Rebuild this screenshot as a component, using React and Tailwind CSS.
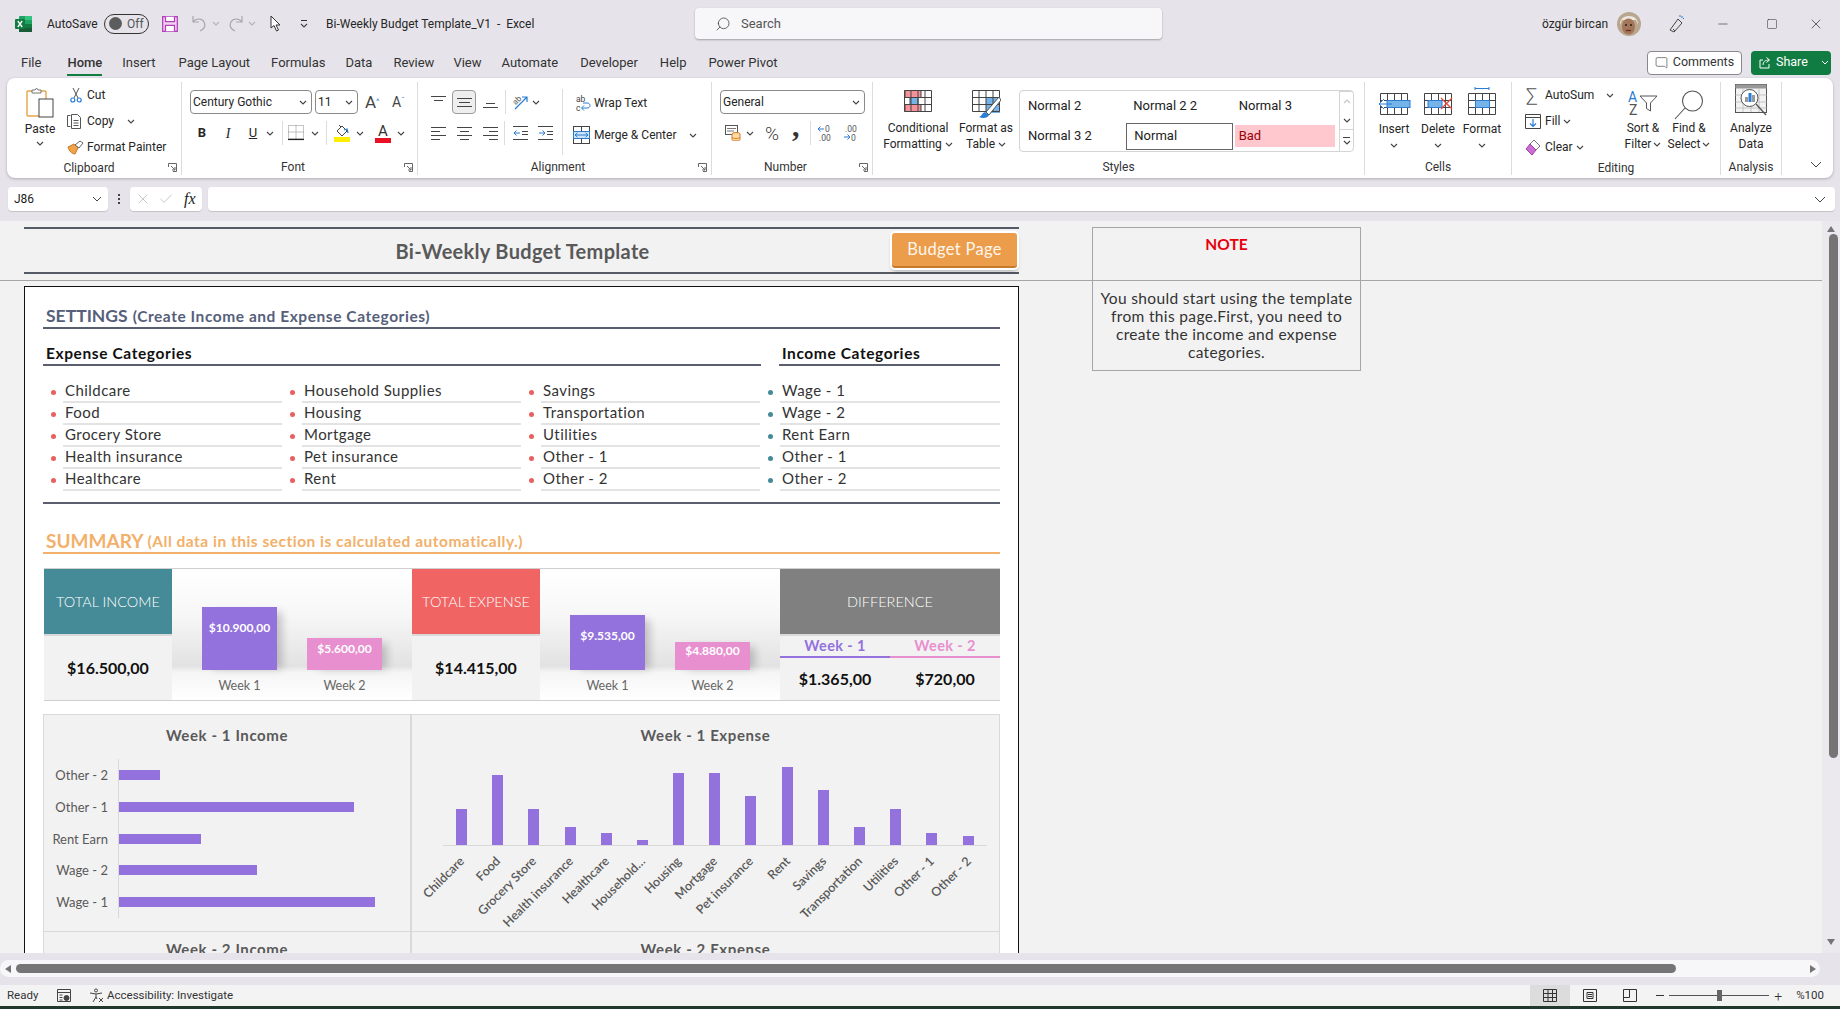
import { Search, Minus, Square, X, Check, MessageSquare } from 'lucide-react'

const EXPENSE_COLS = [
  ['Childcare', 'Food', 'Grocery Store', 'Health insurance', 'Healthcare'],
  ['Household Supplies', 'Housing', 'Mortgage', 'Pet insurance', 'Rent'],
  ['Savings', 'Transportation', 'Utilities', 'Other - 1', 'Other - 2'],
]
const INCOME = ['Wage - 1', 'Wage - 2', 'Rent Earn', 'Other - 1', 'Other - 2']

const WEEK1_INCOME = [
  { label: 'Other - 2', y: 15, w: 41 },
  { label: 'Other - 1', y: 47, w: 235 },
  { label: 'Rent Earn', y: 79, w: 82 },
  { label: 'Wage - 2', y: 110, w: 138 },
  { label: 'Wage - 1', y: 142, w: 256 },
]

const WEEK1_EXPENSE = [
  { label: 'Childcare', x: 44, top: 54 },
  { label: 'Food', x: 80, top: 20 },
  { label: 'Grocery Store', x: 116, top: 54 },
  { label: 'Health insurance', x: 153, top: 72 },
  { label: 'Healthcare', x: 189, top: 78 },
  { label: 'Household…', x: 225, top: 85 },
  { label: 'Housing', x: 261, top: 18 },
  { label: 'Mortgage', x: 297, top: 18 },
  { label: 'Pet insurance', x: 333, top: 41 },
  { label: 'Rent', x: 370, top: 12 },
  { label: 'Savings', x: 406, top: 35 },
  { label: 'Transportation', x: 442, top: 72 },
  { label: 'Utilities', x: 478, top: 54 },
  { label: 'Other - 1', x: 514, top: 78 },
  { label: 'Other - 2', x: 551, top: 81 },
]

function Chev({ className = '' }) {
  return (
    <svg width="8" height="5" viewBox="0 0 8 5" fill="none" className={className}>
      <path d="M1 1l3 3 3-3" stroke="#444" strokeWidth="1.1" />
    </svg>
  )
}

function Launcher() {
  return (
    <svg width="9" height="9" viewBox="0 0 9 9" fill="none">
      <path d="M.5 4V.5H8.500V8.500H5M3 3l4 4M7 4v3H4" stroke="#666" />
    </svg>
  )
}

function Group({ className, label, launcher, labelPad = '', children }) {
  return (
    <div className={`flex flex-col flex-none h-[93px] border-r border-[#dcdcdc] ${className}`}>
      <div className="h-[78px] flex">{children}</div>
      <div className="h-[16px] flex items-center">
        <span className={`flex-1 text-center text-[12px] leading-none text-[#333] ${labelPad}`}>{label}</span>
        {launcher && <span className="mr-[4px] flex"><Launcher /></span>}
      </div>
    </div>
  )
}

function Lines({ rows }) {
  return (
    <svg width="15" height="14" viewBox="0 0 15 14" fill="none" stroke="#444">
      {rows.map((r, i) => <path key={i} d={`M${r[0]} ${r[2]}.5H${r[1]}`} />)}
    </svg>
  )
}

function ExcelLogo() {
  return (
    <svg width="17" height="16" viewBox="0 0 17 16">
      <rect x="4" y="0" width="13" height="16" rx="1" fill="#21a366" />
      <rect x="10" y="0" width="7" height="4" fill="#33c481" />
      <rect x="10" y="8" width="7" height="4" fill="#107c41" />
      <rect x="4" y="12" width="13" height="4" fill="#185c37" />
      <rect x="0" y="3" width="10" height="10" rx="1" fill="#107c41" />
      <path d="M2.800 5l4.400 6M7.200 5l-4.400 6" stroke="#fff" strokeWidth="1.300" />
    </svg>
  )
}

function SaveIcon() {
  return (
    <svg width="16" height="16" viewBox="0 0 16 16" fill="#f0d4f2" stroke="#b33fbd" strokeWidth="1.300">
      <path d="M.7.7h14.600v14.600H.7z" />
      <path d="M3.500.7v5h9v-5M3.500 15.300v-6h9v6" fill="#fff" />
    </svg>
  )
}

function UndoIcon({ flip }) {
  return (
    <svg width="15" height="17" viewBox="0 0 15 17" fill="none" stroke="#a8a8ac" strokeWidth="1.200" className={flip ? '-scale-x-100' : ''}>
      <path d="M1 1v6h6M1 7c3-4 9-4 11 0 2 4 0 7-4 9" />
    </svg>
  )
}

function Avatar() {
  return (
    <svg width="24" height="24" viewBox="0 0 24 24">
      <circle cx="12" cy="12" r="12" fill="#b8a68e" />
      <path d="M3 13C2 1 22 1 21 13l-2-5H5z" fill="#efe9df" />
      <ellipse cx="11.500" cy="14.500" rx="6.500" ry="8" fill="#a3765a" />
      <circle cx="9" cy="13" r="1" fill="#2d1c14" />
      <circle cx="14" cy="13" r="1" fill="#2d1c14" />
      <path d="M9 18.500h5" stroke="#6b2e20" strokeWidth="1.300" />
    </svg>
  )
}

function PasteIcon() {
  return (
    <svg width="28" height="31" viewBox="0 0 28 31" fill="none">
      <rect x="1" y="4" width="19" height="25" rx="1" fill="#fff" stroke="#e6a54a" strokeWidth="1.400" />
      <path d="M6 6V3h3l1.500-2L12 3h3v3z" fill="#fff" stroke="#777" />
      <rect x="13" y="12" width="14" height="18" fill="#fff" stroke="#444" />
    </svg>
  )
}

function CutIcon() {
  return (
    <svg width="12" height="16" viewBox="0 0 12 16" fill="none" stroke="#555">
      <path d="M3 1l5 10M9 1L4 11" />
      <circle cx="2.800" cy="13" r="2" stroke="#2b7cd3" strokeWidth="1.200" />
      <circle cx="9.200" cy="13" r="2" stroke="#2b7cd3" strokeWidth="1.200" />
    </svg>
  )
}

function CopyIcon() {
  return (
    <svg width="16" height="15" viewBox="0 0 16 15" fill="none" stroke="#555">
      <path d="M3.500 1.500h-3v11h3" />
      <path d="M4.500.5h6l3 3v11h-9z" fill="#fff" />
      <path d="M6.500 6.500h5M6.500 9h5M6.500 11.500h5" />
    </svg>
  )
}

function PainterIcon() {
  return (
    <svg width="17" height="15" viewBox="0 0 17 15" fill="none">
      <path d="M1 7l6-3 4 4-3 6C5 14 2 11 1 7z" fill="#f0a347" stroke="#c9772a" />
      <path d="M8 5l5-4 3 2-4 5z" fill="#fff" stroke="#666" />
    </svg>
  )
}

function BordersIcon() {
  return (
    <svg width="16" height="16" viewBox="0 0 16 16" fill="none" stroke="#888" strokeDasharray="1 1">
      <path d="M.5.5h15v13H.5zM8 .5v13M.5 7h15" />
      <path d="M0 14.500h16" stroke="#222" strokeDasharray="none" strokeWidth="1.200" />
    </svg>
  )
}

function FillIcon() {
  return (
    <svg width="16" height="18" viewBox="0 0 16 18" fill="none">
      <path d="M3 7l5-5 5 5-5 5z" stroke="#444" />
      <path d="M5 1l2 2" stroke="#444" />
      <path d="M10 6l3-1 1 4" stroke="#2b7cd3" strokeWidth="1.300" />
      <rect x="0" y="13" width="16" height="5" fill="#ffee00" />
    </svg>
  )
}

function FontColorIcon() {
  return (
    <div className="flex flex-col items-center w-[16px] leading-none">
      <span className="text-[15px] leading-[14px] text-[#333]">A</span>
      <span className="w-[16px] h-[5px] bg-[#e81123]" />
    </div>
  )
}

function OrientIcon() {
  return (
    <svg width="17" height="18" viewBox="0 0 17 18" fill="none">
      <text x="1" y="10" fontSize="8" fill="#555" transform="rotate(-45 5 8)">ab</text>
      <path d="M3 16L15 4M10 4h5v5" stroke="#2b7cd3" strokeWidth="1.200" />
    </svg>
  )
}

function IndentIcon({ dir }) {
  return (
    <svg width="15" height="14" viewBox="0 0 15 14" fill="none" stroke="#444">
      <path d="M0 .5h15M0 13.500h15M9 5.500h6M9 8.500h6" />
      {dir === 'out'
        ? <path d="M7 7H1M3.500 4.500L1 7l2.500 2.500" stroke="#2b7cd3" />
        : <path d="M1 7h6M4.500 4.500L7 7l-2.500 2.500" stroke="#2b7cd3" />}
    </svg>
  )
}

function WrapIcon() {
  return (
    <svg width="15" height="18" viewBox="0 0 15 18" fill="none">
      <text x="0" y="7.500" fontSize="8.500" fill="#444">ab</text>
      <text x="0" y="16.500" fontSize="8.500" fill="#444">c</text>
      <path d="M6 14h5c4 0 4-5 0-5H7M8 11.500L5.500 14 8 16.500" stroke="#2b7cd3" />
    </svg>
  )
}

function MergeIcon() {
  return (
    <svg width="17" height="18" viewBox="0 0 17 18" fill="none">
      <rect x=".5" y=".5" width="16" height="17" stroke="#444" />
      <rect x=".5" y="5.500" width="16" height="7" fill="#cfe4f7" stroke="#2b7cd3" />
      <path d="M2 9h13M4.500 6.800L2 9l2.500 2.200M12.500 6.800L15 9l-2.500 2.200" stroke="#2b7cd3" />
      <path d="M8.500 .5v5M8.500 12.500v5" stroke="#444" />
    </svg>
  )
}

function AccountingIcon() {
  return (
    <svg width="16" height="16" viewBox="0 0 16 16" fill="none">
      <rect x=".5" y=".5" width="12" height="9" fill="#fff" stroke="#555" />
      <path d="M2 3.500h9M2 6h7" stroke="#777" />
      <ellipse cx="11" cy="9" rx="4" ry="1.500" fill="#fbd9a8" stroke="#d67f21" />
      <path d="M7 9v5.500c0 2 8 2 8 0V9" fill="#fbd9a8" stroke="#d67f21" />
      <path d="M7 12c0 2 8 2 8 0" stroke="#d67f21" />
    </svg>
  )
}

function DecimalIcon({ inc }) {
  return (
    <svg width="16" height="18" viewBox="0 0 16 18" fill="none">
      <text x={inc ? 8 : 2} y="8" fontSize="8.500" fill="#555">{inc ? '0' : '.00'}</text>
      <text x={inc ? 2 : 8} y="17" fontSize="8.500" fill="#555">{inc ? '.00' : '0'}</text>
      {inc
        ? <path d="M7 5H1M3.500 2.500L1 5l2.500 2.500" stroke="#2b7cd3" />
        : <path d="M1 13h6M4.500 10.500L7 13l-2.500 2.500" stroke="#2b7cd3" />}
    </svg>
  )
}

function CondFormatIcon() {
  return (
    <svg width="28" height="22" viewBox="0 0 28 22" fill="none" stroke="#444">
      <rect x="1" y=".5" width="16" height="7" fill="#f4929a" />
      <rect x="6" y="7.500" width="8" height="7" fill="#76b3e8" />
      <rect x="1" y="14.500" width="16" height="7" fill="#f4929a" />
      <path d="M.5.500h27v21H.5zM.5 7.500h27M.5 14.500h27M7 .500v21M14 .500v21M21 .500v21" />
    </svg>
  )
}

function FormatTableIcon() {
  return (
    <svg width="29" height="29" viewBox="0 0 29 29" fill="none">
      <rect x="14" y="8" width="14" height="15" fill="#76b3e8" />
      <path d="M.5.500h27v21H.5zM.5 7.500h27M.5 14.500h27M7 .500v21M14 .500v21M21 .500v21" stroke="#444" />
      <path d="M27 7L14 22l3 3L29 10z" fill="#fff" stroke="#555" />
      <path d="M13 22c-3 1-3 4-6 5 4 2 9 1 10-2z" fill="#2b7cd3" />
    </svg>
  )
}

function CellsIcon({ kind }) {
  return (
    <svg width="33" height="30" viewBox="0 0 33 30" fill="none">
      <path d="M2.500 6.500h27v21h-27zM2.500 13.500h27M2.500 20.500h27M9.500 6.500v21M16.500 6.500v21M23.500 6.500v21" stroke="#444" />
      {kind === 'insert' && (
        <>
          <rect x="9" y="13.500" width="23" height="7" fill="#76b3e8" stroke="#2b7cd3" />
          <path d="M14 17H1M6 12l-5 5 5 5" stroke="#2b7cd3" fill="#fff" />
        </>
      )}
      {kind === 'delete' && (
        <>
          <rect x="6" y="13.500" width="14" height="7" fill="#76b3e8" stroke="#2b7cd3" />
          <path d="M19 11l11 11M30 11L19 22" stroke="#e0493f" strokeWidth="1.300" />
        </>
      )}
      {kind === 'format' && (
        <>
          <rect x="9.500" y="13.500" width="14" height="7" fill="#76b3e8" stroke="#2b7cd3" />
          <path d="M9 1.500h14M9 0v3M23 0v3" stroke="#2b7cd3" />
        </>
      )}
    </svg>
  )
}

function FillDownIcon() {
  return (
    <svg width="16" height="15" viewBox="0 0 16 15" fill="none">
      <path d="M.5.500h15v14H.5z" fill="#fff" stroke="#444" />
      <path d="M.5 3.500h15" stroke="#444" />
      <path d="M8 5v7M5 9.500L8 12.500l3-3" stroke="#2b7cd3" strokeWidth="1.200" />
    </svg>
  )
}

function ClearIcon() {
  return (
    <svg width="16" height="17" viewBox="0 0 16 17" fill="none">
      <path d="M9 1l6 6-4 4-6-6z" fill="#fff" stroke="#777" />
      <path d="M5 5l6 6-4 5-6-6z" fill="#c86fd1" stroke="#a23fb0" />
    </svg>
  )
}

function SortIcon() {
  return (
    <svg width="30" height="28" viewBox="0 0 30 28" fill="none">
      <text x="0" y="12" fontSize="14" fill="#2b7cd3">A</text>
      <text x="1" y="25" fontSize="14" fill="#555">Z</text>
      <path d="M12 6h17l-6.500 7v8l-4-2.500V13z" stroke="#555" />
    </svg>
  )
}

function FindIcon() {
  return (
    <svg width="30" height="30" viewBox="0 0 30 30" fill="none" stroke="#555" strokeWidth="1.100">
      <circle cx="18.500" cy="11" r="10" />
      <path d="M11 18L1 29" />
    </svg>
  )
}

function AnalyzeIcon() {
  return (
    <svg width="32" height="32" viewBox="0 0 32 32" fill="none">
      <rect x=".5" y=".5" width="31" height="28" fill="#f2f2f2" stroke="#555" />
      <rect x=".5" y=".5" width="31" height="4" fill="#999" />
      <path d="M.5 11h31M.5 18h31M.5 24h31M8 4v24M16 4v24M24 4v24" stroke="#c4c4c4" />
      <circle cx="14.500" cy="14" r="8.500" fill="#fff" stroke="#555" />
      <rect x="10" y="13" width="3" height="5" fill="#999" />
      <rect x="13.500" y="9" width="3" height="9" fill="#2b7cd3" />
      <rect x="17" y="11" width="3" height="7" fill="#999" />
      <path d="M21 20l10 11" stroke="#555" strokeWidth="1.300" />
    </svg>
  )
}

function Ribbon() {
  return (
    <div className="mx-[7px] h-[100px] flex-none rounded-lg bg-white pt-[4px] flex shadow-[0_1px_3px_rgba(0,0,0,0.25)] text-[12px] text-[#262626]">
      <Group className="w-[175px]" label="Clipboard" launcher labelPad="pl-[3px]">
        <div className="ml-[13px] w-[40px] flex flex-col items-center pt-[5px]">
          <PasteIcon />
          <span className="mt-[3px] leading-4">Paste</span>
          <Chev className="mt-[4px]" />
        </div>
        <div className="ml-[7px] flex flex-col">
          <div className="h-[26px] flex items-center"><span className="w-[20px] flex pl-[3px]"><CutIcon /></span>Cut</div>
          <div className="h-[26px] flex items-center"><span className="w-[20px] flex"><CopyIcon /></span>Copy<Chev className="ml-[13px]" /></div>
          <div className="h-[26px] flex items-center"><span className="w-[20px] flex"><PainterIcon /></span>Format Painter</div>
        </div>
      </Group>

      <Group className="w-[236px]" label="Font" launcher>
        <div className="pl-[8px] pt-[8px] flex flex-col">
          <div className="flex items-center h-[24px]">
            <div className="w-[122px] h-[24px] border border-[#8a8a8a] rounded-[4px] flex items-center justify-between pl-[2px] pr-[4px]">Century Gothic<Chev /></div>
            <div className="ml-[3px] w-[43px] h-[24px] border border-[#8a8a8a] rounded-[4px] flex items-center justify-between pl-[2px] pr-[4px]">11<Chev /></div>
            <span className="ml-[7px] w-[17px] text-[17px] leading-none text-[#444]">A<sup className="text-[8px] text-[#2b7cd3]">^</sup></span>
            <span className="ml-[10px] w-[14px] text-[14px] leading-none text-[#444]">A<sup className="text-[8px] text-[#2b7cd3]">ˇ</sup></span>
          </div>
          <div className="flex items-center h-[24px] mt-[7px]">
            <span className="ml-[6px] w-[12px] text-center font-bold text-[13px]">B</span>
            <span className="ml-[14px] w-[12px] text-center italic text-[14px] font-['Liberation_Serif',serif]">I</span>
            <span className="ml-[13px] w-[12px] text-center underline text-[13px]">U</span>
            <Chev className="ml-[7px]" />
            <span className="ml-[8px] w-px h-[24px] bg-[#dcdcdc]" />
            <span className="ml-[5px] flex"><BordersIcon /></span>
            <Chev className="ml-[7px]" />
            <span className="ml-[7px] w-px h-[24px] bg-[#dcdcdc]" />
            <span className="ml-[7px] flex"><FillIcon /></span>
            <Chev className="ml-[6px]" />
            <span className="ml-[11px] flex"><FontColorIcon /></span>
            <Chev className="ml-[6px]" />
          </div>
        </div>
      </Group>

      <Group className="w-[294px]" label="Alignment" launcher>
        <div className="w-[145px] flex-none border-r border-[#dcdcdc] h-[66px] mt-[7px] pl-[13px] pt-[1px] flex flex-col">
          <div className="flex items-center h-[24px]">
            <span className="flex"><Lines rows={[[0, 15, 1], [3, 12, 5]]} /></span>
            <span className="ml-[6px] w-[24px] h-[24px] rounded-[4px] border border-[#9a9a9a] bg-[#eeeeee] flex items-center justify-center"><Lines rows={[[0, 15, 3], [2, 13, 7], [0, 15, 11]]} /></span>
            <span className="ml-[7px] flex"><Lines rows={[[3, 12, 8], [0, 15, 12]]} /></span>
            <span className="ml-[7px] w-px h-[24px] bg-[#dcdcdc]" />
            <span className="ml-[6px] flex"><OrientIcon /></span>
            <Chev className="ml-[3px]" />
          </div>
          <div className="flex items-center h-[24px] mt-[7px]">
            <span className="flex"><Lines rows={[[0, 15, 1], [0, 9, 5], [0, 15, 9], [0, 9, 13]]} /></span>
            <span className="ml-[11px] flex"><Lines rows={[[0, 15, 1], [3, 12, 5], [0, 15, 9], [3, 12, 13]]} /></span>
            <span className="ml-[11px] flex"><Lines rows={[[0, 15, 1], [6, 15, 5], [0, 15, 9], [6, 15, 13]]} /></span>
            <span className="ml-[6px] w-px h-[24px] bg-[#dcdcdc]" />
            <span className="ml-[8px] flex"><IndentIcon dir="out" /></span>
            <span className="ml-[10px] flex"><IndentIcon dir="in" /></span>
          </div>
        </div>
        <div className="pl-[10px] pt-[10px] flex flex-col">
          <div className="flex items-center h-[22px]"><span className="ml-[3px] w-[18px] flex"><WrapIcon /></span>Wrap Text</div>
          <div className="flex items-center h-[22px] mt-[10px]"><span className="w-[21px] flex"><MergeIcon /></span>Merge &amp; Center<Chev className="ml-[13px]" /></div>
        </div>
      </Group>

      <Group className="w-[161px]" label="Number" launcher>
        <div className="pl-[8px] pt-[8px] flex flex-col">
          <div className="w-[145px] h-[24px] border border-[#8a8a8a] rounded-[4px] flex items-center justify-between pl-[2px] pr-[4px]">General<Chev /></div>
          <div className="flex items-center h-[24px] mt-[7px]">
            <span className="ml-[5px] flex"><AccountingIcon /></span>
            <Chev className="ml-[5px]" />
            <span className="ml-[11px] text-[19px] leading-none text-[#444] font-light">%</span>
            <span className="ml-[13px] w-[9px] text-[30px] leading-none font-bold text-[#333] font-['Liberation_Serif',serif] -mt-[14px]">,</span>
            <span className="ml-[9px] w-px h-[24px] bg-[#dcdcdc]" />
            <span className="ml-[6px] flex"><DecimalIcon inc /></span>
            <span className="ml-[10px] flex"><DecimalIcon /></span>
          </div>
        </div>
      </Group>

      <Group className="w-[492px]" label="Styles">
        <div className="ml-[10px] w-[70px] flex flex-col items-center pt-[8px]">
          <span className="h-[30px]"><CondFormatIcon /></span>
          <span className="leading-4">Conditional</span>
          <span className="leading-4 flex items-center gap-[3px]">Formatting<Chev /></span>
        </div>
        <div className="w-[66px] flex flex-col items-center pt-[8px]">
          <span className="h-[30px]"><FormatTableIcon /></span>
          <span className="leading-4">Format as</span>
          <span className="leading-4 flex items-center gap-[3px]">Table<Chev /></span>
        </div>
        <div className="mt-[8px] w-[335px] h-[62px] rounded-[4px] border border-[#d4d4d4] flex text-[13px]">
          <div className="w-[320px] grid grid-cols-3 grid-rows-2 text-[#222]">
            <div className="pl-[8px] flex items-center">Normal 2</div>
            <div className="pl-[7px] flex items-center">Normal 2 2</div>
            <div className="pl-[6px] flex items-center">Normal 3</div>
            <div className="pl-[8px] flex items-center">Normal 3 2</div>
            <div className="pl-[7px] flex items-center self-center border border-[#666] h-[27px]">Normal</div>
            <div className="ml-[2px] pl-[4px] w-[100px] h-[22px] flex items-center self-center bg-[#ffc7ce] text-[#9c0006]">Bad</div>
          </div>
          <div className="w-[14px] flex flex-col border-l border-[#d4d4d4]">
            <span className="h-[21px] flex items-center justify-center border-b border-[#d4d4d4] rotate-180"><Chev className="opacity-30" /></span>
            <span className="h-[18px] flex items-center justify-center border-b border-[#d4d4d4]"><Chev /></span>
            <span className="flex-1 flex flex-col gap-[2px] items-center justify-center"><span className="w-[7px] h-px bg-[#444]" /><Chev /></span>
          </div>
        </div>
      </Group>

      <Group className="w-[147px]" label="Cells">
        <div className="ml-[7px] flex">
          {[['Insert', 'insert'], ['Delete', 'delete'], ['Format', 'format']].map(([t, k]) => (
            <div key={k} className="w-[44px] flex flex-col items-center pt-[5px]">
              <CellsIcon kind={k} />
              <span className="mt-[4px] leading-4">{t}</span>
              <Chev className="mt-[6px]" />
            </div>
          ))}
        </div>
      </Group>

      <Group className="w-[209px]" label="Editing">
        <div className="ml-[13px] w-[95px] flex-none flex flex-col">
          <div className="h-[26px] flex items-center"><span className="w-[20px] text-[19px] leading-none text-[#555] font-light pl-[1px]">∑</span>AutoSum<Chev className="ml-[12px]" /></div>
          <div className="h-[26px] flex items-center"><span className="w-[20px] flex"><FillDownIcon /></span>Fill<Chev className="ml-[3px]" /></div>
          <div className="h-[26px] flex items-center"><span className="w-[20px] flex"><ClearIcon /></span>Clear<Chev className="ml-[3px]" /></div>
        </div>
        <div className="w-[46px] flex flex-col items-center pt-[8px]">
          <span className="h-[30px]"><SortIcon /></span>
          <span className="leading-4">Sort &amp;</span>
          <span className="leading-4 flex items-center gap-[2px]">Filter<Chev /></span>
        </div>
        <div className="w-[46px] flex flex-col items-center pt-[8px]">
          <span className="h-[30px]"><FindIcon /></span>
          <span className="leading-4">Find &amp;</span>
          <span className="leading-4 flex items-center gap-[2px]">Select<Chev /></span>
        </div>
      </Group>

      <Group className="w-[61px]" label="Analysis">
        <div className="w-full flex flex-col items-center pt-[2px]">
          <span className="h-[36px]"><AnalyzeIcon /></span>
          <span className="leading-4">Analyze</span>
          <span className="leading-4">Data</span>
        </div>
      </Group>

      <div className="flex-1 flex items-end justify-end pr-[11px] pb-[10px]">
        <svg width="12" height="7" viewBox="0 0 12 7" fill="none"><path d="M1 1l5 5 5-5" stroke="#444" /></svg>
      </div>
    </div>
  )
}

function TitleBar() {
  return (
    <div className="h-[47px] flex-none flex items-center text-[12px] text-[#262626] whitespace-nowrap">
      <span className="ml-[15px] flex"><ExcelLogo /></span>
      <span className="ml-[15px] w-[50px]">AutoSave</span>
      <span className="ml-[7px] w-[45px] h-[20px] rounded-full border border-[#333] flex items-center pl-[4px] gap-[5px]">
        <span className="w-[13px] h-[13px] rounded-full bg-[#5c5c5c]" />
        <span className="text-[#555]">Off</span>
      </span>
      <span className="ml-[13px] flex"><SaveIcon /></span>
      <span className="ml-[14px] flex"><UndoIcon /></span>
      <Chev className="ml-[5px] opacity-30" />
      <span className="ml-[8px] flex"><UndoIcon flip /></span>
      <Chev className="ml-[5px] opacity-30" />
      <svg width="12" height="18" viewBox="0 0 12 18" fill="#fff" stroke="#333" className="ml-[14px]">
        <path d="M1 1v12l3-2.500L6.500 16l2-1-2.500-5h4z" />
      </svg>
      <span className="ml-[18px] flex flex-col items-center gap-[2px]">
        <span className="w-[6px] h-px bg-[#333]" />
        <Chev />
      </span>
      <span className="ml-[18px] w-[207px]">Bi-Weekly Budget Template_V1&nbsp; -&nbsp; Excel</span>
      <div className="ml-[162px] w-[467px] h-[31px] rounded-[4px] bg-[#f7f6f8] shadow-[0_1px_2px_rgba(0,0,0,0.3)] flex items-center pl-[20px] gap-[10px] text-[13px] text-[#555]">
        <Search size={16} strokeWidth={1.2} className="-scale-x-100 text-[#444]" />
        Search
      </div>
      <span className="ml-[380px] w-[65px]">özgür bircan</span>
      <span className="ml-[10px] flex"><Avatar /></span>
      <svg width="16" height="20" viewBox="0 0 16 20" fill="none" stroke="#444" className="ml-[28px]">
        <path d="M1 16L9 5l4 4-8 9zM4 15l2 2" />
        <path d="M13 2v2M15 4l-1 1M11 1v2" stroke="#2b7cd3" />
      </svg>
      <Minus size={14} strokeWidth={1} className="ml-[31px] text-[#222]" />
      <Square size={12} strokeWidth={1} className="ml-[36px] text-[#222]" />
      <X size={16} strokeWidth={1} className="ml-[30px] text-[#222]" />
    </div>
  )
}

function TabsRow() {
  return (
    <div className="h-[31px] flex-none flex items-center text-[13px] text-[#333]">
      <span className="ml-[21px] mr-[26px]">File</span>
      <span className="relative h-[31px] flex items-center font-medium mr-[20px]">
        Home
        <span className="absolute left-0 right-0 bottom-[2px] h-[2px] bg-[#107c41]" />
      </span>
      <span className="mr-[23px]">Insert</span>
      <span className="mr-[21px]">Page Layout</span>
      <span className="mr-[20px]">Formulas</span>
      <span className="mr-[21px]">Data</span>
      <span className="mr-[19px]">Review</span>
      <span className="mr-[20px]">View</span>
      <span className="mr-[22px]">Automate</span>
      <span className="mr-[22px]">Developer</span>
      <span className="mr-[22px]">Help</span>
      <span>Power Pivot</span>
      <div className="ml-auto mr-[9px] flex items-center gap-[9px]">
        <span className="w-[95px] h-[24px] rounded-[4px] border border-[#888] bg-white flex items-center justify-center gap-[5px] text-[12.500px]">
          <MessageSquare size={13} strokeWidth={1.1} className="-scale-x-100" />Comments
        </span>
        <span className="w-[80px] h-[24px] rounded-[4px] bg-[#107c41] text-white flex items-center pl-[8px] gap-[5px] text-[12.500px]">
          <svg width="12" height="13" viewBox="0 0 12 13" fill="none" stroke="#fff">
            <path d="M4 4H1v8h9V8M4 9c0-3 2-5 6-5M7.500 1.500L10.500 4 7.500 6.500" />
          </svg>
          Share
          <svg width="8" height="5" viewBox="0 0 8 5" fill="none" className="ml-[8px]"><path d="M1 1l3 3 3-3" stroke="#fff" /></svg>
        </span>
      </div>
    </div>
  )
}

function FormulaBar() {
  return (
    <div className="h-[43px] flex-none pt-[9px] flex text-[12px] text-[#222] pl-[8px] pr-[5px]">
      <div className="w-[100px] h-[24px] bg-white rounded-[4px] shadow-[0_1px_1px_rgba(0,0,0,0.15)] flex items-center justify-between pl-[6px] pr-[6px]">J86<svg width="10" height="6" viewBox="0 0 10 6" fill="none"><path d="M1 1l4 4 4-4" stroke="#444" /></svg></div>
      <div className="w-[22px] h-[24px] flex flex-col items-center justify-center gap-[2px]">
        <span className="w-[2px] h-[2px] bg-[#444]" /><span className="w-[2px] h-[2px] bg-[#444]" /><span className="w-[2px] h-[2px] bg-[#444]" />
      </div>
      <div className="w-[72px] h-[24px] bg-white rounded-[4px] shadow-[0_1px_1px_rgba(0,0,0,0.15)] flex items-center pl-[5px]">
        <X size={16} strokeWidth={1} className="text-[#aaa]" />
        <Check size={16} strokeWidth={1} className="ml-[7px] text-[#aaa]" />
        <span className="ml-[10px] font-['Liberation_Serif',serif] italic text-[16px] leading-none">fx</span>
      </div>
      <div className="ml-[6px] flex-1 h-[24px] bg-white rounded-[4px] shadow-[0_1px_1px_rgba(0,0,0,0.15)] flex items-center justify-end pr-[9px]">
        <svg width="12" height="7" viewBox="0 0 12 7" fill="none"><path d="M1 1l5 5 5-5" stroke="#444" /></svg>
      </div>
    </div>
  )
}

function CategoryColumn({ items, color, className }) {
  return (
    <div className={className}>
      {items.map(t => (
        <div key={t} className="flex h-[22px]">
          <span className="w-[15px] flex pl-[3px] pt-[9px]"><span className={`w-[5px] h-[5px] rounded-full ${color}`} /></span>
          <span className="flex-1 border-b-2 border-[#e3e3e3] pl-[2px] text-[15px] tracking-[0.45px] leading-[19px] text-[#333]">{t}</span>
        </div>
      ))}
    </div>
  )
}

function MiniBars({ bars }) {
  return (
    <div className="w-[240px] flex-none flex flex-col bg-[linear-gradient(to_bottom,#ffffff_0%,#f7f7f7_35%,#e2e2e2_74%,#f5f5f5_79%,#ffffff_100%)]">
      <div className="h-[101px] flex items-end gap-[30px] pl-[30px]">
        {bars.map(b => (
          <div key={b.value} className={`w-[75px] text-center text-white font-bold text-[12px] leading-4 shadow-[8px_2px_8px_-3px_rgba(0,0,0,0.2)] ${b.className}`}>{b.value}</div>
        ))}
      </div>
      <div className="flex gap-[30px] pl-[30px] pt-[8px] text-[12.500px] leading-4 text-[#666]">
        <span className="w-[75px] text-center">Week 1</span>
        <span className="w-[75px] text-center">Week 2</span>
      </div>
    </div>
  )
}

function TotalTile({ title, value, color }) {
  return (
    <div className="w-[128px] flex-none flex flex-col">
      <div className={`h-[65px] flex items-center justify-center text-white text-[14.500px] font-light ${color}`}>{title}</div>
      <div className="flex-1 bg-[#f2f2f2] border-t-2 border-[#d9d9d9] flex items-center justify-center font-bold text-[16px] text-[#111]">{value}</div>
    </div>
  )
}

function Week1IncomeChart() {
  return (
    <svg width="368" height="177" viewBox="0 0 368 177" className="block">
      <path d="M74.500 4v159" stroke="#d9d9d9" />
      {WEEK1_INCOME.map(b => (
        <g key={b.label}>
          <rect x="75" y={b.y} width={b.w} height="10" fill="#9372dd" />
          <text x="64" y={b.y + 10} textAnchor="end" fontSize="13" fill="#595959">{b.label}</text>
        </g>
      ))}
    </svg>
  )
}

function Week1ExpenseChart() {
  return (
    <svg width="587" height="177" viewBox="0 0 587 177" className="block">
      <path d="M31 90.500h544" stroke="#d9d9d9" />
      {WEEK1_EXPENSE.map(b => (
        <g key={b.label}>
          <rect x={b.x} y={b.top} width="11" height={90 - b.top} fill="#9372dd" />
          <text x={b.x + 9} y="107" textAnchor="end" fontSize="12.500" fontWeight="600" fill="#595959" transform={`rotate(-45 ${b.x + 9} 107)`}>{b.label}</text>
        </g>
      ))}
    </svg>
  )
}

function BudgetBox() {
  return (
    <div className="ml-[24px] mt-[5px] w-[995px] h-[700px] flex-none border border-[#111] bg-white pl-[18px] pr-[18px]">
      <div className="h-[42px] border-b-2 border-[#5a5f70] flex items-end pl-[3px] text-[#56607a] font-bold gap-[5px]">
        <span className="text-[17.500px] leading-[23px]">SETTINGS</span>
        <span className="text-[15.500px] tracking-[0.55px] leading-[21px]">(Create Income and Expense Categories)</span>
      </div>
      <div className="flex gap-[18px]">
        <div className="w-[718px] h-[37px] border-b-2 border-[#5a5f70] flex items-end pl-[3px] pb-[1px] font-bold text-[15.500px] tracking-[0.6px] leading-5 text-[#111]">Expense Categories</div>
        <div className="w-[221px] h-[37px] border-b-2 border-[#5a5f70] flex items-end pl-[3px] pb-[1px] font-bold text-[15.500px] tracking-[0.6px] leading-5 text-[#111]">Income Categories</div>
      </div>
      <div className="mt-[15px] ml-[5px] flex gap-[5px]">
        {EXPENSE_COLS.map(col => (
          <CategoryColumn key={col[0]} items={col} color="bg-[#e8605f]" className="w-[234px]" />
        ))}
        <CategoryColumn items={INCOME} color="bg-[#458a97]" className="w-[235px]" />
      </div>
      <div className="mt-[11px] h-[2px] bg-[#5a5f70]" />
      <div className="h-[50px] border-b-2 border-[#f2b06a] flex items-end pl-[3px] text-[#f2b06a] font-bold gap-[4px]">
        <span className="text-[19px] leading-[23px]">SUMMARY</span>
        <span className="text-[15.500px] tracking-[0.5px] leading-[21px]">(All data in this section is calculated automatically.)</span>
      </div>

      <div className="mt-[14px] ml-[1px] h-[133px] flex border-y border-[#cfcfcf]">
        <TotalTile title="TOTAL INCOME" value="$16.500,00" color="bg-[#458a97]" />
        <MiniBars bars={[
          { value: '$10.900,00', className: 'h-[63px] pt-[13px] bg-[#9372dd]' },
          { value: '$5.600,00', className: 'h-[32px] pt-[3px] bg-[#e88fcf]' },
        ]} />
        <TotalTile title="TOTAL EXPENSE" value="$14.415,00" color="bg-[#f06464]" />
        <MiniBars bars={[
          { value: '$9.535,00', className: 'h-[55px] pt-[13px] bg-[#9372dd]' },
          { value: '$4.880,00', className: 'h-[28px] pt-[1px] bg-[#e88fcf]' },
        ]} />
        <div className="flex-1 flex flex-col">
          <div className="h-[65px] bg-[#808080] flex items-center justify-center text-white text-[14.500px] font-light">DIFFERENCE</div>
          <div className="flex-1 bg-[#f2f2f2] border-t-2 border-[#d9d9d9] flex">
            <div className="flex-1 flex flex-col">
              <div className="h-[22px] border-b-2 border-[#9372dd] text-center font-bold text-[14.500px] leading-[20px] text-[#9372dd] tracking-wide">Week - 1</div>
              <div className="flex-1 flex items-center justify-center font-bold text-[16px] text-[#111]">$1.365,00</div>
            </div>
            <div className="flex-1 flex flex-col">
              <div className="h-[22px] border-b-2 border-[#e88fcf] text-center font-bold text-[14.500px] leading-[20px] text-[#e88fcf] tracking-wide">Week - 2</div>
              <div className="flex-1 flex items-center justify-center font-bold text-[16px] text-[#111]">$720,00</div>
            </div>
          </div>
        </div>
      </div>

      <div className="mt-[13px] flex bg-[#f2f2f2] border-t border-[#d9d9d9] border-x">
        <div className="w-[368px] flex-none border-r-2 border-[#d9d9d9]">
          <div className="h-[217px] border-b border-[#d9d9d9]">
            <div className="h-[40px] flex items-center justify-center font-bold text-[15px] tracking-[0.6px] text-[#595959]">Week - 1 Income</div>
            <Week1IncomeChart />
          </div>
          <div className="h-[40px] pt-[7px] text-center font-bold text-[15px] tracking-[0.6px] leading-5 text-[#595959]">Week - 2 Income</div>
        </div>
        <div className="flex-1">
          <div className="h-[217px] border-b border-[#d9d9d9]">
            <div className="h-[40px] flex items-center justify-center font-bold text-[15px] tracking-[0.6px] text-[#595959]">Week - 1 Expense</div>
            <Week1ExpenseChart />
          </div>
          <div className="h-[40px] pt-[7px] text-center font-bold text-[15px] tracking-[0.6px] leading-5 text-[#595959]">Week - 2 Expense</div>
        </div>
      </div>
    </div>
  )
}

function Sheet() {
  return (
    <div className="h-[732px] flex-none flex font-['Lato',sans-serif]">
      <div className="flex-1 flex flex-col bg-[#f2f2f2] overflow-hidden">
        <div className="h-[60px] flex-none flex border-b border-[#a6a6a6]">
          <div className="ml-[24px] mt-[6px] w-[995px] h-[47px] flex-none border-y-2 border-[#555b66] flex items-center">
            <span className="w-[129px] flex-none" />
            <span className="flex-1 text-center font-bold text-[20px] tracking-[0.3px] text-[#595959]">Bi-Weekly Budget Template</span>
            <span className="w-[125px] h-[35px] mr-[2px] flex-none rounded-[3px] bg-[#eb9d4c] border-b-2 border-[#c87a2c] ring-2 ring-white shadow-[0_3px_4px_rgba(0,0,0,0.3)] flex items-center justify-center text-[16.500px] tracking-[0.3px] text-[#fff6ec]">Budget Page</span>
          </div>
          <div className="ml-[73px] mt-[6px] w-[269px] flex-none border-t border-x border-[#a6a6a6] pt-[6px] text-center font-bold text-[15.500px] leading-[20px] text-[#e8000d]">NOTE</div>
        </div>
        <div className="flex-1 flex overflow-hidden">
          <BudgetBox />
          <div className="ml-[73px] w-[269px] h-[90px] flex-none border-b border-x border-[#a6a6a6] px-[3px] pt-[8px] text-center text-[15.500px] tracking-[0.35px] leading-[18px] text-[#333]">
            You should start using the template from this page.First, you need to create the income and expense categories.
          </div>
        </div>
      </div>
      <div className="w-[18px] flex-none flex flex-col items-center bg-[#ece9ee] py-[3px]">
        <svg width="8" height="6" viewBox="0 0 8 6" className="mt-[2px]"><path d="M4 0l4 6H0z" fill="#757575" /></svg>
        <span className="mt-[2px] ml-[4px] w-[9px] h-[524px] rounded-full bg-[#757575]" />
        <svg width="8" height="6" viewBox="0 0 8 6" className="mt-auto mb-[5px]"><path d="M4 6l4-6H0z" fill="#757575" /></svg>
      </div>
    </div>
  )
}

function BottomBar() {
  return (
    <>
      <div className="h-[32px] flex-none pt-[7px] pr-[20px]">
        <div className="h-[17px] rounded-full bg-[#f7f6f8] flex items-center">
          <svg width="6" height="8" viewBox="0 0 6 8" className="ml-[5px]"><path d="M0 4l6-4v8z" fill="#757575" /></svg>
          <span className="ml-[5px] w-[1660px] h-[9px] rounded-full bg-[#757575]" />
          <svg width="6" height="8" viewBox="0 0 6 8" className="ml-auto mr-[4px]"><path d="M6 4L0 0v8z" fill="#757575" /></svg>
        </div>
      </div>
      <div className="h-[21px] flex-none bg-[#f3f3f3] flex items-center text-[11.500px] text-[#333]">
        <span className="ml-[7px] w-[30px]">Ready</span>
        <svg width="14" height="14" viewBox="0 0 14 14" fill="none" stroke="#444" className="ml-[20px]">
          <path d="M.5.500h13v12H.5zM.5 3.500h13M2.500 6h3M2.500 8.500h3M2.500 11h3" />
          <circle cx="9.500" cy="9" r="2.500" fill="#444" />
        </svg>
        <svg width="15" height="15" viewBox="0 0 15 15" fill="none" stroke="#444" className="ml-[18px]">
          <circle cx="7" cy="2.500" r="1.500" />
          <path d="M1 5l6 1 6-1M7 6v3M7 9l-3 5M7 9l1 2M10 10l4 4M14 10l-4 4" />
        </svg>
        <span className="ml-[3px]">Accessibility: Investigate</span>
        <span className="ml-auto w-[40px] h-[21px] bg-[#dcdcdc] flex items-center justify-center">
          <svg width="14" height="13" viewBox="0 0 14 13" fill="none" stroke="#333"><path d="M.5.500h13v12H.5zM.5 4.500h13M.5 8.500h13M5 .5v12M9.500 .5v12" /></svg>
        </span>
        <svg width="14" height="13" viewBox="0 0 14 13" fill="none" stroke="#333" className="ml-[13px]"><path d="M.5.500h13v12H.5zM4 3.500h6v6H4zM5 5.500h4M5 7.500h4" /></svg>
        <svg width="14" height="13" viewBox="0 0 14 13" fill="none" stroke="#333" className="ml-[26px]"><path d="M.5.500h13v12H.5zM.5 8.500h6V.5" /></svg>
        <span className="ml-[19px] w-[8px] h-px bg-[#333]" />
        <span className="ml-[5px] w-[100px] h-px bg-[#555] flex items-center">
          <span className="ml-[48px] w-[5px] h-[11px] bg-[#666]" />
        </span>
        <span className="ml-[5px] text-[14px] leading-none font-light">+</span>
        <span className="ml-[14px] mr-[16px]">%100</span>
      </div>
      <div className="flex-1 bg-[#1f3a2d]" />
    </>
  )
}

export default function App() {
  return (
    <div className="w-[1840px] h-[1009px] overflow-hidden flex flex-col bg-[#e6e4ea] font-['Roboto',sans-serif]">
      <TitleBar />
      <TabsRow />
      <Ribbon />
      <FormulaBar />
      <Sheet />
      <BottomBar />
    </div>
  )
}
